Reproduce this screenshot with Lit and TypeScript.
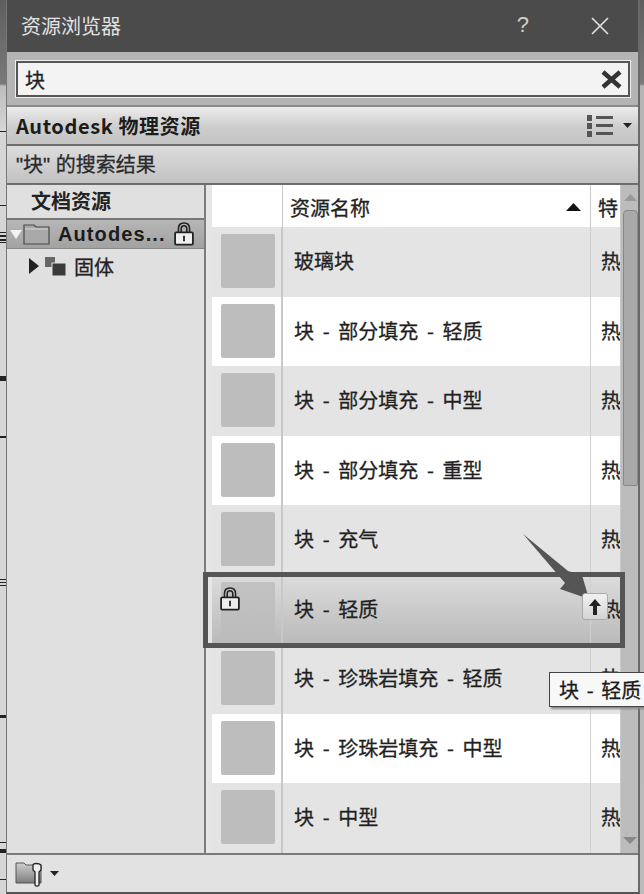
import { LitElement, html, css, svg } from "lit";
import { customElement } from "lit/decorators.js";

const ROWS = [
  "玻璃块",
  "块 - 部分填充 - 轻质",
  "块 - 部分填充 - 中型",
  "块 - 部分填充 - 重型",
  "块 - 充气",
  "块 - 轻质",
  "块 - 珍珠岩填充 - 轻质",
  "块 - 珍珠岩填充 - 中型",
  "块 - 中型",
];

const MARKS = [
  [131, 1], [205, 1], [232, 1], [235, 2], [239, 2], [242, 1],
  [376, 3], [379, 2], [436, 2], [579, 1], [582, 1], [585, 1],
  [715, 3], [842, 1], [849, 4], [879, 1],
];

const lock = (w: number, h: number) => html`<svg width=${w} height=${h} viewBox="0 0 18 22">
  <path d="M4 10V6.500C4 3.500 6 1.500 9 1.500S14 3.500 14 6.500V10M6.500 10V6.500C6.500 5 7.500 4 9 4S11.500 5 11.500 6.500V10" fill="none" stroke="#222" stroke-width="1.400"/>
  <rect x="1" y="10" width="16" height="11" rx="1" fill="#eee" stroke="#222" stroke-width="1.600"/>
  <rect x="8.200" y="13" width="1.600" height="5" fill="#222"/>
</svg>`;

const caret = () => html`<svg width="9" height="5" viewBox="0 0 9 5"><path d="M0 0H9L4.500 5Z" fill="#222"/></svg>`;

@customElement("app-root")
export class AppRoot extends LitElement {
  static styles = css`
    :host { display: block; position: relative; width: 644px; height: 894px; overflow: hidden; background: #d0d0d0;
      font-family: "Noto Sans CJK SC", "Liberation Sans", sans-serif; color: #222; }
    .page { display: flex; height: 894px; }
    .edge { flex: none; position: relative; }
    .edge.l { width: 6px; background: linear-gradient(#5e5e5e 0, #7a7a7a 84px, #bdbdbd 86px, #d6d6d6 130px, #d6d6d6 100%); }
    .edge.r { width: 4px; background: linear-gradient(#5e5e5e 0, #7a7a7a 84px, #b4b4b4 86px, #bababa 100%); }
    .mark { position: absolute; left: 0; width: 6px; background: #222; }
    .win { flex: none; width: 634px; display: flex; flex-direction: column; border-bottom: 2px solid #555; border-right: 2px solid #6a6a6a; border-left: 1px solid #777; box-sizing: border-box; background: #e0e0e0; }
    .title { flex: none; height: 52px; background: #4b4b4b; color: #e2e2e2; display: flex; align-items: center; padding: 0 29px 0 14px; font-size: 20px; }
    .title .t { flex: 1; padding-bottom: 2px; }
    .q { font-family: "Liberation Sans", sans-serif; font-size: 22px; margin-right: 62px; color: #d0d0d0; padding-bottom: 3px; }
    .search { flex: none; height: 55px; box-sizing: border-box; background: #b4b4b4; padding: 9px 8px 9px 9px; border-bottom: 2px solid #8a8a8a; }
    .input { height: 36px; box-sizing: border-box; border: 2px solid #555; background: #f3f3f3; display: flex; align-items: center; justify-content: space-between; padding: 0 6px 0 7px; font-size: 20px; color: #222; box-shadow: 0 0 0 1px #eee; -webkit-text-stroke: .3px #222; }
    .band { flex: none; display: flex; align-items: center; box-sizing: border-box; background: linear-gradient(#ececec, #cdcdcd 55%, #c4c4c4); padding: 0 9px; border-bottom: 2px solid #6e6e6e; }
    .band.a { height: 39px; font-size: 20px; font-weight: 700; justify-content: space-between; color: #1c1c1c; padding-right: 6px; }
    .band.a .nm { letter-spacing: .6px; }
    .band.b { height: 39px; font-size: 20px; background: linear-gradient(#dcdcdc, #c2c2c2); padding-bottom: 2px; font-family: "Liberation Sans", "Noto Sans CJK SC", sans-serif; color: #2a2a2a; -webkit-text-stroke: .3px #2a2a2a; }
    .viewbtn { display: flex; align-items: center; gap: 9px; }
    .body { flex: 1; min-height: 0; display: flex; }
    .side { flex: none; width: 197px; background: #e0e0e0; box-sizing: border-box; }
    .sidehead { height: 33px; font-size: 20px; font-weight: 700; padding: 0 0 3px 24px; display: flex; align-items: center; color: #222; box-sizing: border-box; }
    .node { height: 31px; box-sizing: border-box; display: flex; align-items: center; background: linear-gradient(#b6b6b6, #a2a2a2); border-top: 2px solid #777; border-bottom: 1px solid #888; font-weight: 700; font-size: 20px; padding: 0 10px 0 3px; }
    .node .tri { margin-right: 1px; }
    .node .nm { margin-left: 8px; flex: 1; font-family: "Liberation Sans", sans-serif; letter-spacing: 1.100px; white-space: nowrap; color: #1c1c1c; }
    .node svg:last-child { margin-top: -2px; }
    .leaf { height: 34px; display: flex; align-items: center; padding-left: 22px; font-size: 20px; box-sizing: border-box; -webkit-text-stroke: .3px #222; }
    .leaf span { margin-left: 8px; }
    .sep { flex: none; width: 2px; background: #7d7d7d; }
    .grid { flex: 1; min-width: 0; display: flex; flex-direction: column; background: #e6e6e6; position: relative; padding-left: 6px; }
    .head, .row { display: grid; grid-template-columns: 71px 308px 1fr; -webkit-text-stroke: .3px #222; }
    .head { height: 42px; flex: none; background: #fff; font-size: 20px; }
    .head > div { border-right: 1px solid #c8c8c8; display: flex; align-items: center; box-sizing: border-box; overflow: hidden; white-space: nowrap; }
    .head > div:last-child { border: 0; }
    .hname { justify-content: space-between; padding: 2px 9px 0 7px; }
    .hprop { padding: 2px 0 0 7px; letter-spacing: 4px; }
    .row { height: 69.500px; font-size: 20px; word-spacing: 4.200px; }
    .row:nth-child(odd) { background: #e4e4e4; }
    .row:nth-child(even) { background: #fff; }
    .row.sel { background: linear-gradient(#dcdcdc, #bababa); }
    .row > div { border-right: 1px solid #d0d0d0; display: flex; align-items: center; box-sizing: border-box; overflow: hidden; white-space: nowrap; }
    .row > div:last-child { border: 0; }
    .row > .cthumb { padding: 7px 0 0 9px; align-items: flex-start; border-right: 2px solid #c8c8c8; }
    .thumb { width: 54px; height: 54px; background: #bdbdbd; border-radius: 2px; }
    .sel .thumb { background: linear-gradient(#c2c2c2, #bcbcbc); }
    .cname { padding-left: 11px; padding-bottom: 2px; color: #1f1f1f; }
    .cprop { padding-left: 10px; padding-bottom: 2px; }
    .scroll { position: absolute; right: 0; top: 0; bottom: 0; width: 18px; background: #bcbcbc; border-left: 1px solid #c8c8c8; box-sizing: border-box; }
    .sb-up { position: absolute; left: 3px; top: 9px; }
    .sb-dn { position: absolute; left: 2px; bottom: 9px; }
    .thumbbar { position: absolute; left: 2px; top: 25px; width: 15px; height: 276px; background: #a9a9a9; border: 1px solid #888; border-radius: 4px 4px 2px 2px; box-sizing: border-box; }
    .foot { flex: none; height: 39px; box-sizing: border-box; border-top: 2px solid #7a7a7a; background: #e2e2e2; display: flex; align-items: center; padding-left: 8px; gap: 6px; }
    .lockabs { position: absolute; left: 220px; top: 586px; display: flex; }
    .hl { position: absolute; left: 203px; top: 572px; width: 422px; height: 76px; box-sizing: border-box; border: 5px solid #555; }
    .up { position: absolute; left: 582px; top: 593px; width: 26px; height: 27px; box-sizing: border-box; background: linear-gradient(#f2f2f2, #d4d4d4); border: 1px solid #aaa; border-radius: 3px; display: flex; align-items: center; justify-content: center; }
    .arrow { position: absolute; left: 520px; top: 530px; }
    .tip { position: absolute; left: 549px; top: 672px; width: 100px; height: 35px; box-sizing: border-box; background: #f8f8f8; border: 1px solid #444; box-shadow: 2px 2px 2px #888; font-size: 20px; word-spacing: 3.200px; padding: 0 0 1px 9px; display: flex; align-items: center; white-space: nowrap; color: #1a1a1a; -webkit-text-stroke: .3px #1a1a1a; }
  `;

  render() {
    return html`
      <div class="page">
        <div class="edge l">
          ${MARKS.map(([y, h]) => html`<div class="mark" style="top:${y}px;height:${h}px"></div>`)}
        </div>
        <div class="win">
          <div class="title"><span class="t">资源浏览器</span><span class="q">?</span>
            <svg width="18" height="18" viewBox="0 0 18 18"><path d="M1 1L17 17M17 1L1 17" stroke="#e4e4e4" stroke-width="1.600"/></svg>
          </div>
          <div class="search"><div class="input"><span>块</span>
            <svg width="21" height="19" viewBox="0 0 21 19"><path d="M2 2L19 17M19 2L2 17" stroke="#333" stroke-width="4.400"/></svg>
          </div></div>
          <div class="band a"><span class="nm">Autodesk 物理资源</span>
            <span class="viewbtn">
              <svg width="27" height="24" viewBox="0 0 27 24">
                ${[1, 9, 17].map((y) => svg`<rect x="0" y=${y} width="5" height="6" fill="#555"/><rect x="9" y=${y + 1} width="17" height="3" fill="#555"/>`)}
              </svg>
              ${caret()}
            </span>
          </div>
          <div class="band b">"块" 的搜索结果</div>
          <div class="body">
            <div class="side">
              <div class="sidehead">文档资源</div>
              <div class="node">
                <svg class="tri" width="12" height="9" viewBox="0 0 12 9"><path d="M0 0H12L6 9Z" fill="#f2f2f2"/></svg>
                <svg width="27" height="22" viewBox="0 0 27 22"><path d="M1 2H11L13 4H26V21H1Z" fill="#a8a8a8" stroke="#4a4a4a" stroke-width="1.200"/><path d="M2 6H25" stroke="#d8d8d8"/></svg>
                <span class="nm">Autodes...</span>
                ${lock(20, 25)}
              </div>
              <div class="leaf">
                <svg width="10" height="16" viewBox="0 0 10 16"><path d="M0 0L10 8L0 16Z" fill="#222"/></svg>
                <svg style="margin-left:6px" width="21" height="19" viewBox="0 0 21 19"><rect x="0" y="0" width="10" height="10" fill="#666"/><rect x="7" y="6" width="14" height="13" fill="#3a3a3a" stroke="#e0e0e0"/></svg>
                <span>固体</span>
              </div>
            </div>
            <div class="sep"></div>
            <div class="grid">
              <div class="head">
                <div></div>
                <div class="hname"><span>资源名称</span><svg width="15" height="8" viewBox="0 0 15 8"><path d="M0 8L7.500 0L15 8Z" fill="#111"/></svg></div>
                <div class="hprop"><span>特性</span></div>
              </div>
              <div>
                ${ROWS.map((r, i) => html`<div class="row ${i === 5 ? "sel" : ""}">
                  <div class="cthumb"><div class="thumb"></div></div>
                  <div class="cname">${r}</div>
                  <div class="cprop">热</div>
                </div>`)}
              </div>
              <div class="scroll">
                <svg class="sb-up" width="13" height="7" viewBox="0 0 13 7"><path d="M0 7L6.500 0L13 7Z" fill="#999"/></svg>
                <div class="thumbbar"></div>
                <svg class="sb-dn" width="14" height="7" viewBox="0 0 14 7"><path d="M0 0H14L7 7Z" fill="#888"/></svg>
              </div>
            </div>
          </div>
          <div class="foot">
            <svg width="29" height="26" viewBox="0 0 29 26">
              <defs><linearGradient id="fg" x1="0" y1="0" x2="0" y2="1"><stop offset="0" stop-color="#cfcfcf"/><stop offset="1" stop-color="#7c7c7c"/></linearGradient></defs>
              <path d="M1 2H9L11 4H26V22H1Z" fill="url(#fg)" stroke="#555"/>
              <path d="M18 4C18 2 24 2 26 4V9L24 11V24C24 25.500 20 25.500 20 24V11L18 9Z" fill="#eee" stroke="#222" stroke-width="1.300"/>
            </svg>
            ${caret()}
          </div>
        </div>
        <div class="edge r"></div>
      </div>
      <div class="lockabs">${lock(20, 25)}</div>
      <div class="hl"></div>
      <svg class="arrow" width="80" height="80" viewBox="0 0 80 80"><path d="M3 4L48 41L62 45L69 69L40 59L45 53Z" fill="#555"/></svg>
      <div class="up"><svg width="12" height="16" viewBox="0 0 12 16"><path d="M6 0L12 7H8V16H4V7H0Z" fill="#222"/></svg></div>
      <div class="tip">块 - 轻质</div>
    `;
  }
}
